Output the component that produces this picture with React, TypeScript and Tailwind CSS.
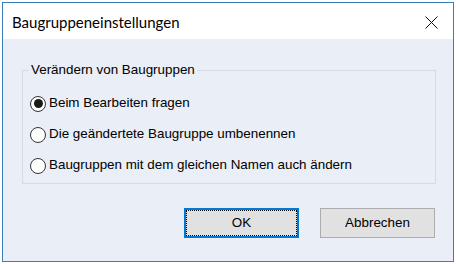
import React, { useState } from 'react';

const options = [
  'Beim Bearbeiten fragen',
  'Die geändertete Baugruppe umbenennen',
  'Baugruppen mit dem gleichen Namen auch ändern',
];

const Radio = ({ checked }: { checked: boolean }) => (
  <span className="flex h-[16px] w-[16px] shrink-0 items-center justify-center rounded-full border border-[#333333] bg-white">
    {checked && <span className="h-[9px] w-[9px] rounded-full bg-[#1a1a1a]" />}
  </span>
);

const App = () => {
  const [selected, setSelected] = useState(0);

  return (
    <div className="h-[264px] w-[456px] bg-white p-[2px]">
      <div className="flex h-[260px] w-[452px] flex-col border border-[#3a7db5]">
        {/* title bar */}
        <div className="flex h-[36px] shrink-0 items-center justify-between bg-white pl-[9px] pr-[15px] pt-[3px]">
          <span className="text-[15px] text-black" style={{ fontFamily: 'Lato, "Noto Sans", sans-serif' }}>
            Baugruppeneinstellungen
          </span>
          <svg width="13" height="13" viewBox="0 0 13 13">
            <path d="M0.5 0.5 L12.5 12.5 M12.5 0.5 L0.5 12.5" stroke="#111" strokeWidth="1" fill="none" />
          </svg>
        </div>

        {/* body */}
        <div
          className="flex flex-1 flex-col bg-[#e9eef7] pl-[19px] text-[13.4px] text-black"
          style={{ fontFamily: '"Liberation Sans", Arial, sans-serif' }}
        >
          <fieldset className="mt-[23px] w-[414px] border border-[#d6dbe2] pb-[2px] pt-[10px]">
            <legend className="ml-[6px] px-[2px] leading-[16px]">Verändern von Baugruppen</legend>
            {options.map((label, i) => (
              <label
                key={label}
                className="flex h-[31px] cursor-default items-center gap-[3px] pl-[7px]"
                onClick={() => setSelected(i)}
              >
                <Radio checked={selected === i} />
                <span>{label}</span>
              </label>
            ))}
          </fieldset>

          <div className="mt-[24px] flex justify-end gap-[21px] pr-[18px]">
            <button className="h-[30px] w-[115px] border-2 border-[#0078d7] bg-[#e1e1e1] p-0">
              <span className="flex h-full w-full items-center justify-center border border-dotted border-black">
                OK
              </span>
            </button>
            <button className="h-[30px] w-[115px] border border-[#adadad] bg-[#e1e1e1]">Abbrechen</button>
          </div>
        </div>
      </div>
    </div>
  );
};

export default App;
